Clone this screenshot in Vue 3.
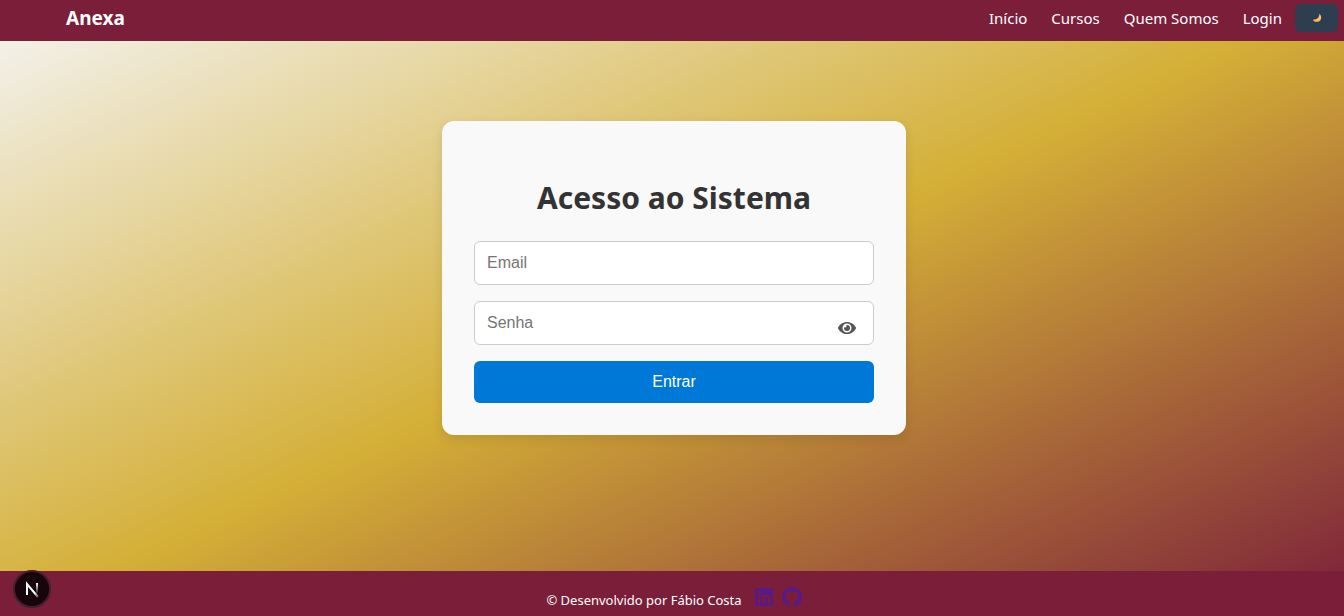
<script setup>
import { ref } from 'vue'

const links = ['Início', 'Cursos', 'Quem Somos', 'Login']
const email = ref('')
const password = ref('')
const showPassword = ref(false)
</script>

<template>
  <div class="page">
    <header class="bar">
      <a class="brand" href="#">Anexa</a>
      <nav class="nav">
        <a v-for="link in links" :key="link" href="#">{{ link }}</a>
        <button class="theme" type="button" aria-label="Alternar tema">
          <svg viewBox="0 0 16 16" width="10" height="10" aria-hidden="true">
            <path d="M11.6 1.2C12.2 6.2 8.6 11 1.4 10.8C4 15.4 10.8 15.6 13.6 11.2C15.8 7.8 14.8 3.4 11.6 1.2Z" fill="#ffc164" />
            <path d="M1.4 10.8C4 15.4 10.8 15.6 13.6 11.2C10.6 13.4 6 13.4 1.4 10.8Z" fill="#e88b45" />
          </svg>
        </button>
      </nav>
    </header>

    <main class="main">
      <form class="card" @submit.prevent>
        <h1>Acesso ao Sistema</h1>
        <input v-model="email" type="email" placeholder="Email" aria-label="Email" />
        <div class="password">
          <input v-model="password" :type="showPassword ? 'text' : 'password'" placeholder="Senha" aria-label="Senha" />
          <button class="eye" type="button" aria-label="Mostrar senha" @click="showPassword = !showPassword">
            <svg viewBox="0 0 576 512" width="18" height="16" aria-hidden="true">
              <path fill="#555" d="M572.52 241.4C518.29 135.59 410.93 64 288 64S57.68 135.64 3.48 241.41a32.35 32.35 0 0 0 0 29.19C57.71 376.41 165.07 448 288 448s230.32-71.64 284.52-177.41a32.35 32.35 0 0 0 0-29.19zM288 400a144 144 0 1 1 144-144 143.93 143.93 0 0 1-144 144zm0-240a95.31 95.31 0 0 0-25.31 3.79 47.85 47.85 0 0 1-66.9 66.9A95.78 95.78 0 1 0 288 160z" />
            </svg>
          </button>
        </div>
        <button class="submit" type="submit">Entrar</button>
      </form>
    </main>

    <footer class="footer">
      <span class="credit">© Desenvolvido por Fábio Costa</span>
      <a href="#" aria-label="LinkedIn">
        <svg viewBox="0 0 448 512" width="18" height="20" aria-hidden="true">
          <path fill="currentColor" d="M416 32H31.9C14.3 32 0 46.5 0 64.3v383.4C0 465.5 14.3 480 31.9 480H416c17.6 0 32-14.5 32-32.3V64.3c0-17.8-14.4-32.3-32-32.3zM135.4 416H69V202.2h66.5V416zm-33.2-243c-21.3 0-38.5-17.3-38.5-38.5S80.9 96 102.2 96c21.2 0 38.5 17.3 38.5 38.5 0 21.3-17.2 38.5-38.5 38.5zm282.1 243h-66.4V312c0-24.8-.5-56.7-34.5-56.7-34.6 0-39.9 27-39.9 54.9V416h-66.4V202.2h63.7v29.2h.9c8.9-16.8 30.6-34.5 62.9-34.5 67.2 0 79.7 44.3 79.7 101.9V416z" />
        </svg>
      </a>
      <a href="#" aria-label="GitHub">
        <svg viewBox="0 0 16 16" width="20" height="20" aria-hidden="true">
          <path fill="currentColor" d="M8 0C3.58 0 0 3.58 0 8c0 3.54 2.29 6.53 5.47 7.59.4.07.55-.17.55-.38 0-.19-.01-.82-.01-1.49-2.01.37-2.53-.49-2.69-.94-.09-.23-.48-.94-.82-1.13-.28-.15-.68-.52-.01-.53.63-.01 1.08.58 1.23.82.72 1.21 1.87.87 2.33.66.07-.52.28-.87.51-1.07-1.78-.2-3.64-.89-3.64-3.95 0-.87.31-1.59.82-2.15-.08-.2-.36-1.02.08-2.12 0 0 .67-.21 2.2.82.64-.18 1.32-.27 2-.27s1.36.09 2 .27c1.53-1.04 2.2-.82 2.2-.82.44 1.1.16 1.92.08 2.12.51.56.82 1.27.82 2.15 0 3.07-1.87 3.75-3.65 3.95.29.25.54.73.54 1.48 0 1.07-.01 1.93-.01 2.2 0 .21.15.46.55.38A8.01 8.01 0 0 0 16 8c0-4.42-3.58-8-8-8z" />
        </svg>
      </a>
    </footer>

    <button class="devtools" type="button" aria-label="Next.js Dev Tools">
      <svg viewBox="0 0 40 40" width="40" height="40" fill="none" aria-hidden="true">
        <defs>
          <linearGradient id="diagonal" x1="14" y1="14" x2="27" y2="28" gradientUnits="userSpaceOnUse">
            <stop offset="0.7" stop-color="#fff" />
            <stop offset="1" stop-color="#fff" stop-opacity="0.2" />
          </linearGradient>
          <linearGradient id="stem" x1="25" y1="14" x2="25" y2="25" gradientUnits="userSpaceOnUse">
            <stop stop-color="#fff" />
            <stop offset="1" stop-color="#fff" stop-opacity="0" />
          </linearGradient>
        </defs>
        <path d="M15 26V15L26 28" stroke="url(#diagonal)" stroke-width="2" />
        <path d="M25 14V25" stroke="url(#stem)" stroke-width="2" />
      </svg>
    </button>
  </div>
</template>

<style>
body {
  margin: 0;
}
</style>

<style scoped>
.page {
  display: flex;
  flex-direction: column;
  min-height: 100vh;
  font-family: "Noto Sans", "Segoe UI", sans-serif;
  background: linear-gradient(155deg, #f5f5f5, #d4af37 50%, #7b1e3a);
}

.bar {
  display: flex;
  align-items: center;
  justify-content: space-between;
  height: 41px;
  padding: 0 6px 0 66px;
  box-sizing: border-box;
  background: #7b1e3a;
}

.bar a {
  color: #fff;
  text-decoration: none;
  line-height: 22px;
  padding-bottom: 6px;
}

.bar .brand {
  font-size: 19px;
  font-weight: 700;
}

.nav {
  display: flex;
  align-items: center;
  gap: 24px;
  font-size: 15px;
}

.theme {
  display: flex;
  align-items: center;
  justify-content: center;
  width: 43px;
  height: 28px;
  margin: 0 0 6px -11px;
  padding: 0;
  border: 0;
  border-radius: 6px;
  background: #2c3e50;
}

.main {
  flex: 1;
  display: flex;
  justify-content: center;
  align-items: flex-start;
  padding: 80px 16px 80px 20px;
}

.card {
  display: flex;
  flex-direction: column;
  gap: 16px;
  width: 100%;
  max-width: 464px;
  padding: 55px 32px 32px;
  box-sizing: border-box;
  border-radius: 12px;
  background: #f9f9f9;
  box-shadow: 0 4px 12px rgba(0, 0, 0, 0.1);
}

h1 {
  margin: 0 0 5px;
  color: #333;
  font-size: 30px;
  line-height: 44px;
  text-align: center;
}

input {
  width: 100%;
  height: 44px;
  padding: 0 12px;
  box-sizing: border-box;
  border: 1px solid #ccc;
  border-radius: 6px;
  background: #fff;
  font: 16px "Liberation Sans", Arial, sans-serif;
}

input::placeholder {
  color: #757575;
}

.password {
  position: relative;
}

.eye {
  position: absolute;
  top: 16px;
  right: 18px;
  display: flex;
  padding: 3px 0;
  border: 0;
  background: none;
}

.submit {
  height: 42px;
  padding: 0;
  border: 0;
  border-radius: 6px;
  background: #0078d7;
  color: #fff;
  font: 16px "Liberation Sans", Arial, sans-serif;
}

.footer {
  display: flex;
  justify-content: center;
  gap: 9px;
  height: 45px;
  padding: 16px 0 0 4px;
  box-sizing: border-box;
  background: #7b1e3a;
  color: #fff;
  font-size: 13px;
  line-height: 26px;
}

.credit {
  margin-right: 4px;
}

.footer a {
  color: #551a8b;
}

.footer svg {
  display: block;
}

.devtools {
  position: fixed;
  left: 13px;
  bottom: 8px;
  display: flex;
  align-items: center;
  justify-content: center;
  width: 38px;
  height: 38px;
  padding: 0;
  border: 2px solid #402030;
  border-radius: 50%;
  background: #18050b;
}

.devtools svg {
  flex-shrink: 0;
}
</style>
